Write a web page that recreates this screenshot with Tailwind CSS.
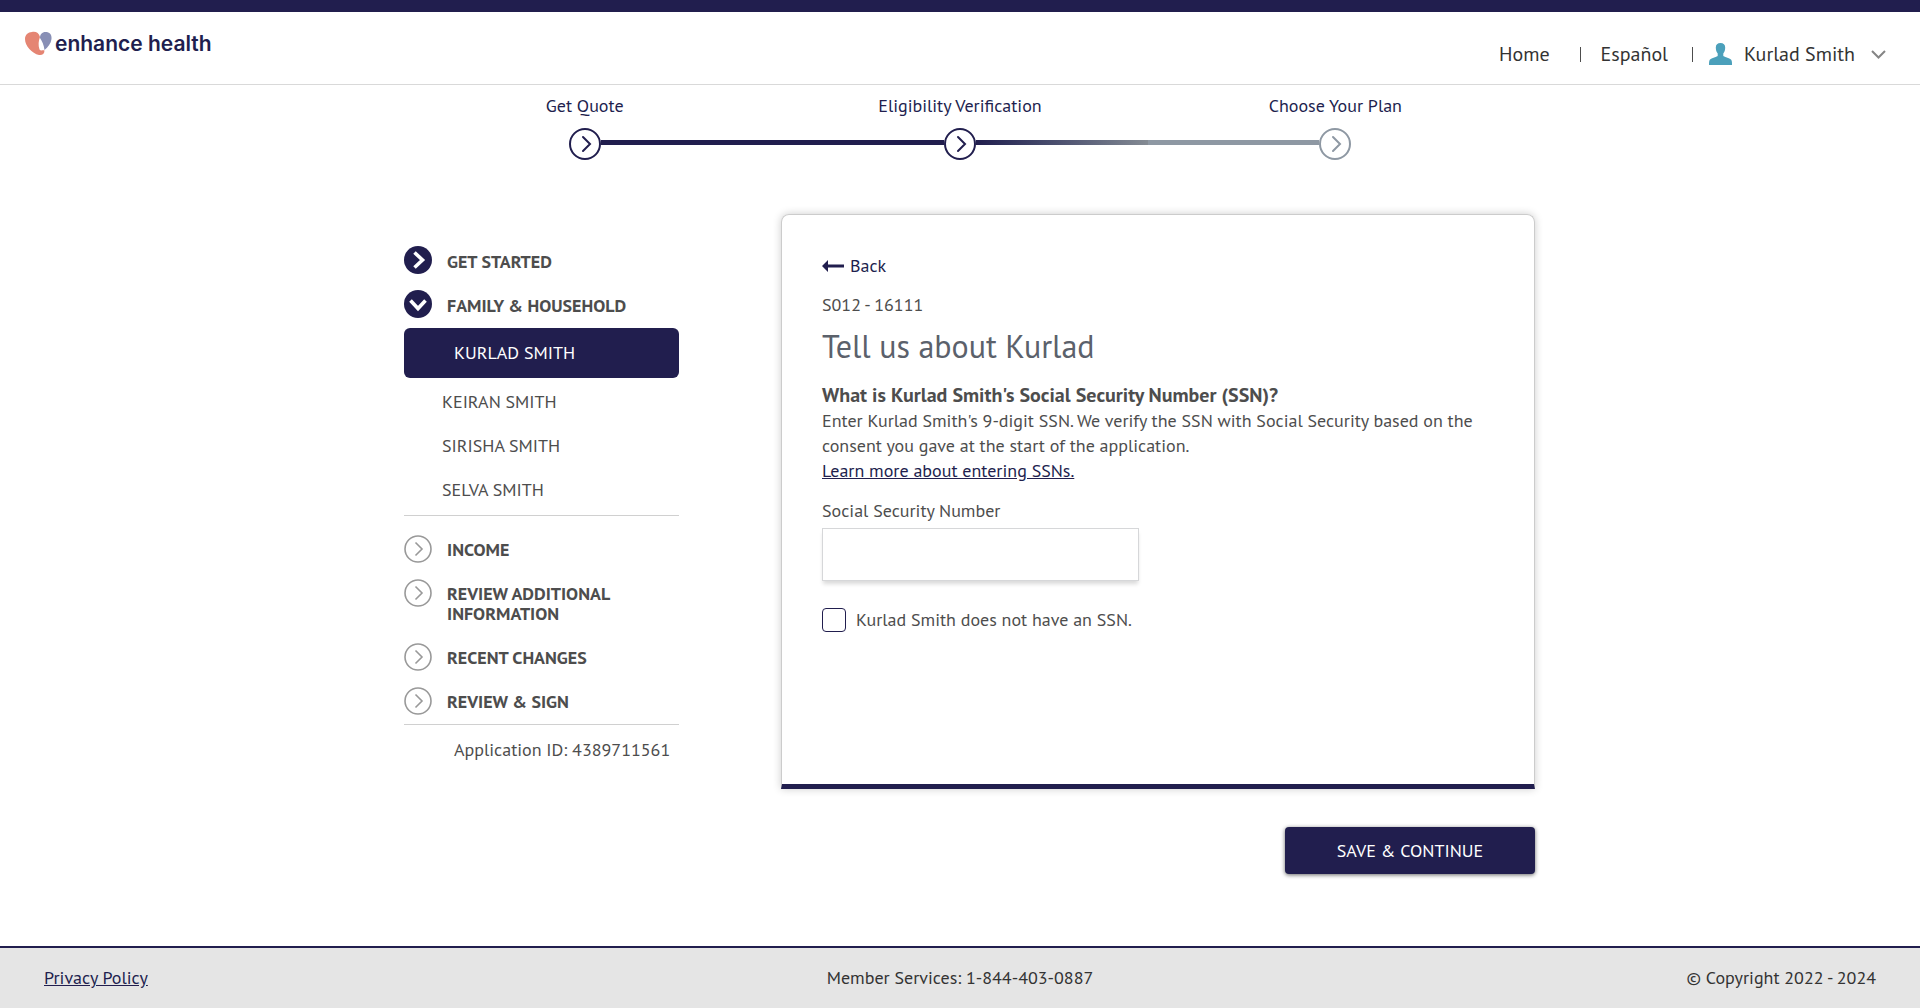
<!DOCTYPE html>
<html lang="en">
<head>
<meta charset="utf-8">
<meta name="viewport" content="width=device-width, initial-scale=1">
<title>Enhance Health - Application</title>
<script src="https://cdn.jsdelivr.net/npm/@tailwindcss/browser@4"></script>
</head>
<body class="flex min-h-screen flex-col bg-white font-['PT_Sans','Noto_Sans',sans-serif] text-lg leading-[25px] text-[#4d4d4d]">

<header class="flex items-start justify-between border-t-12 border-b border-t-[#211e4e] border-b-[#d9d9d9] pr-[34px] pl-[25px]">
  <a href="#" class="flex h-[72px] items-start gap-[3px] pt-[18px] text-[#211e4e]">
    <svg class="mt-px h-[25px] w-[27px]" viewBox="0 0 27 25" aria-hidden="true">
      <path fill="#e58573" d="M7 1C11 .3 14 2 15 6C13.500 10 13 14 14.500 18.500C16 20.500 18 18.500 19.500 19.500C19.500 23 17 24.500 14 24C7 22.500 0 15 0 8C0 4 3 1 7 1Z"/>
      <path fill="#888fb5" d="M20.500 1C24.500 1 27 3.500 26.500 8C26 12.500 23 16 19.500 19C19 14 17 10 15 7C15 3.500 17 1 20.500 1Z"/>
    </svg>
    <span class="font-[Inter,sans-serif] text-[21px] font-semibold leading-[28px]">enhance health</span>
  </a>
  <nav class="flex h-[72px] items-center pt-3 text-xl text-[#333]" aria-label="Account">
    <a href="#">Home</a>
    <span class="ml-[30px] h-[15px] w-px bg-[#4d4d4d]"></span>
    <a href="#" class="ml-5">Español</a>
    <span class="ml-6 h-[15px] w-px bg-[#4d4d4d]"></span>
    <button type="button" class="ml-4 flex items-center">
      <svg class="h-[22px] w-[23px]" viewBox="0 0 23 22" fill="#4ba0bb" aria-hidden="true"><path d="M11.500 0C14.500 0 16.200 1.500 16.200 4.500C16.200 7 15.500 9 14.300 10.500V13C17 14.500 20 15 22 16.500C23 17.500 23 19.500 23 22H0C0 19.500 0 17.500 1 16.500C3 15 6 14.500 8.700 13V10.500C7.500 9 6.800 7 6.800 4.500C6.800 1.500 8.500 0 11.500 0Z"/></svg>
      <span class="ml-3">Kurlad Smith</span>
      <svg class="ml-4 h-[9px] w-[15px]" viewBox="0 0 15 9" fill="none" stroke="#858585" stroke-width="2" aria-hidden="true"><path d="M1 1L7.500 7.500L14 1"/></svg>
    </button>
  </nav>
</header>

<ol class="mx-auto grid w-full max-w-[1126px] grid-cols-3 pt-2 text-[#211e4e]">
  <li>
    <p class="text-center">Get Quote</p>
    <div class="mt-[10px] flex">
      <span class="flex-1"></span>
      <svg class="size-8" viewBox="0 0 32 32" fill="none" stroke="#211e4e" stroke-width="2" aria-hidden="true"><circle cx="16" cy="16" r="15"/><path stroke-linecap="round" d="M14 9L21 16L14 23"/></svg>
      <span class="mt-3 h-[5px] flex-1 bg-[#211e4e]"></span>
    </div>
  </li>
  <li>
    <p class="text-center">Eligibility Verification</p>
    <div class="mt-[10px] flex">
      <span class="mt-3 h-[5px] flex-1 bg-[#211e4e]"></span>
      <svg class="size-8" viewBox="0 0 32 32" fill="none" stroke="#211e4e" stroke-width="2" aria-hidden="true"><circle cx="16" cy="16" r="15"/><path stroke-linecap="round" d="M14 9L21 16L14 23"/></svg>
      <span class="mt-3 h-[5px] flex-1 bg-linear-to-r from-[#211e4e] to-[#848b93]"></span>
    </div>
  </li>
  <li>
    <p class="text-center">Choose Your Plan</p>
    <div class="mt-[10px] flex">
      <span class="mt-3 h-[5px] flex-1 bg-[#8e98a3]"></span>
      <svg class="size-8" viewBox="0 0 32 32" fill="none" stroke="#8e98a3" stroke-width="2" aria-hidden="true"><circle cx="16" cy="16" r="15"/><path stroke-linecap="round" d="M14 9L21 16L14 23"/></svg>
      <span class="flex-1"></span>
    </div>
  </li>
</ol>

<main class="mx-auto flex w-full max-w-[1150px] flex-1 items-start justify-between pt-[54px] pb-[72px] pl-[19px]">
  <nav class="w-[275px] pt-[26px]" aria-label="Application sections">
    <ul class="leading-5">
      <li><a href="#" class="flex gap-[15px] py-[6px] font-bold">
        <svg class="mb-1 size-7 shrink-0" viewBox="0 0 28 28" fill="none" aria-hidden="true"><circle cx="14" cy="14" r="14" fill="#211e4e"/><path stroke="#fff" stroke-width="3.600" d="M10.500 6.500L18.500 14L10.500 21.500"/></svg>
        <span class="pt-[6px]">GET STARTED</span></a></li>
      <li><a href="#" class="flex gap-[15px] py-[6px] font-bold">
        <svg class="mb-1 size-7 shrink-0" viewBox="0 0 28 28" fill="none" aria-hidden="true"><circle cx="14" cy="14" r="14" fill="#211e4e"/><path stroke="#fff" stroke-width="3.600" d="M6.500 10.500L14 18.500L21.500 10.500"/></svg>
        <span class="pt-[6px]">FAMILY &amp; HOUSEHOLD</span></a>
        <ul>
          <li><a href="#" aria-current="page" class="mb-[2px] block rounded-md bg-[#211e4e] py-[15px] pl-[50px] text-white">KURLAD SMITH</a></li>
          <li><a href="#" class="block py-3 pl-[38px]">KEIRAN SMITH</a></li>
          <li><a href="#" class="block py-3 pl-[38px]">SIRISHA SMITH</a></li>
          <li><a href="#" class="block py-3 pl-[38px]">SELVA SMITH</a></li>
        </ul>
      </li>
    </ul>
    <ul class="mt-[3px] border-y border-[#d0d0d0] pt-3 leading-5 font-bold">
      <li><a href="#" class="flex gap-[15px] py-[6px]">
        <svg class="mt-px mb-[3px] size-7 shrink-0" viewBox="0 0 28 28" fill="none" stroke="#999" stroke-width="1.600" aria-hidden="true"><circle cx="14" cy="14" r="13"/><path d="M11.500 7.500L18 14L11.500 20.500"/></svg>
        <span class="pt-[6px]">INCOME</span></a></li>
      <li><a href="#" class="flex gap-[15px] py-[6px]">
        <svg class="mt-px mb-[3px] size-7 shrink-0" viewBox="0 0 28 28" fill="none" stroke="#999" stroke-width="1.600" aria-hidden="true"><circle cx="14" cy="14" r="13"/><path d="M11.500 7.500L18 14L11.500 20.500"/></svg>
        <span class="py-[6px]">REVIEW ADDITIONAL<br>INFORMATION</span></a></li>
      <li><a href="#" class="flex gap-[15px] py-[6px]">
        <svg class="mt-px mb-[3px] size-7 shrink-0" viewBox="0 0 28 28" fill="none" stroke="#999" stroke-width="1.600" aria-hidden="true"><circle cx="14" cy="14" r="13"/><path d="M11.500 7.500L18 14L11.500 20.500"/></svg>
        <span class="pt-[6px]">RECENT CHANGES</span></a></li>
      <li><a href="#" class="flex gap-[15px] py-[6px]">
        <svg class="mt-px mb-[3px] size-7 shrink-0" viewBox="0 0 28 28" fill="none" stroke="#999" stroke-width="1.600" aria-hidden="true"><circle cx="14" cy="14" r="13"/><path d="M11.500 7.500L18 14L11.500 20.500"/></svg>
        <span class="pt-[6px]">REVIEW &amp; SIGN</span></a></li>
    </ul>
    <p class="pt-3 pl-[50px] whitespace-nowrap">Application ID: 4389711561</p>
  </nav>

  <form class="flex w-[754px] flex-col">
    <section class="min-h-[575px] rounded-t-lg border border-b-5 border-[#ccc] border-b-[#211e4e] pt-[38px] pr-[30px] pl-10 shadow-[0_0_8px_rgba(0,0,0,0.2)]">
      <a href="#" class="flex items-center gap-[6px] text-[#211e4e]">
        <svg class="h-3 w-[22px]" viewBox="0 0 22 12" fill="#211e4e" aria-hidden="true"><path d="M0 6L6 0V4.500H22V7.500H6V12Z"/></svg>
        Back
      </a>
      <p class="mt-[14px]">S012 - 16111</p>
      <h1 class="mt-[11px] text-[32px] leading-9 text-[#5b616b]">Tell us about Kurlad</h1>
      <h2 class="mt-[19px] text-xl leading-[25px] font-bold">What is Kurlad Smith's Social Security Number (SSN)?</h2>
      <p>Enter Kurlad Smith's 9-digit SSN. We verify the SSN with Social Security based on the consent you gave at the start of the application.</p>
      <a href="#" class="text-[#211e4e] underline">Learn more about entering SSNs.</a>
      <label for="ssn" class="mt-[15px] block">Social Security Number</label>
      <input id="ssn" type="text" class="mt-[5px] block h-[53px] w-[317px] border border-[#d6d7d9] px-3 shadow-[0_4px_4px_-1px_rgba(0,0,0,0.15)]">
      <label class="mt-[26px] flex items-center gap-[10px]">
        <input type="checkbox" class="size-6 appearance-none rounded border border-[#211e4e] checked:bg-[#211e4e]">
        Kurlad Smith does not have an SSN.
      </label>
    </section>
    <button type="submit" class="mt-[38px] h-[47px] w-[250px] self-end rounded bg-[#211e4e] text-white shadow-[0_1px_4px_rgba(0,0,0,0.6)]">SAVE &amp; CONTINUE</button>
  </form>
</main>

<footer class="grid grid-cols-3 border-t-2 border-[#211e4e] bg-[#e5e5e5] px-11 pt-[17px] pb-[18px] text-[#333]">
  <a href="#" class="justify-self-start text-[#211e4e] underline">Privacy Policy</a>
  <p class="text-center">Member Services: 1-844-403-0887</p>
  <p class="text-right">© Copyright 2022 - 2024</p>
</footer>

</body>
</html>
